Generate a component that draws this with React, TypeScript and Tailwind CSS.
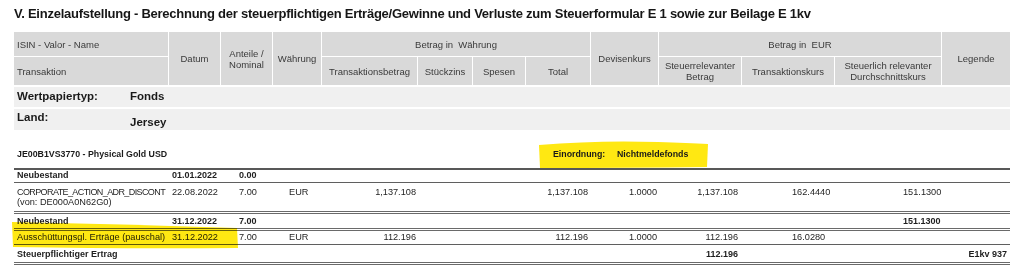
const FONT = "font-['Liberation_Sans_Narrow','Liberation_Sans',Arial,sans-serif]";

const COLS =
  "grid grid-cols-[154px_51px_51px_48px_95px_54px_52px_64px_67px_82px_92px_106px_68px] gap-x-px";

function HeadCell({ children, className = "" }: { children?: React.ReactNode; className?: string }) {
  return (
    <div className={`flex items-center justify-center bg-[#d9d9d9] text-center leading-[11px] ${className}`}>
      {children}
    </div>
  );
}

function Header() {
  return (
    <div className={`${COLS} grid-rows-[24px_28px] gap-y-px text-[9.5px] text-[#3a3a3a]`}>
      <HeadCell className="!justify-start pl-[3px]">ISIN - Valor - Name</HeadCell>
      <HeadCell className="row-span-2">Datum</HeadCell>
      <HeadCell className="row-span-2">
        Anteile /<br />
        Nominal
      </HeadCell>
      <HeadCell className="row-span-2">Währung</HeadCell>
      <HeadCell className="col-span-4">Betrag in&nbsp; Währung</HeadCell>
      <HeadCell className="row-span-2">Devisenkurs</HeadCell>
      <HeadCell className="col-span-3">Betrag in&nbsp; EUR</HeadCell>
      <HeadCell className="row-span-2">Legende</HeadCell>
      <HeadCell className="!justify-start pl-[3px]">Transaktion</HeadCell>
      <HeadCell>Transaktionsbetrag</HeadCell>
      <HeadCell>Stückzins</HeadCell>
      <HeadCell>Spesen</HeadCell>
      <HeadCell>Total</HeadCell>
      <HeadCell>
        Steuerrelevanter
        <br />
        Betrag
      </HeadCell>
      <HeadCell>Transaktionskurs</HeadCell>
      <HeadCell>
        Steuerlich relevanter
        <br />
        Durchschnittskurs
      </HeadCell>
    </div>
  );
}

type Row = {
  cells: (string | string[])[];
  bold?: boolean;
  h: string;
  pt: string;
};

// per-column alignment / padding for the data rows
const CELL = [
  "pl-[3px]",
  "pl-[3px]",
  "pl-[18px]",
  "pl-[16px]",
  "text-right pr-[1px]",
  "",
  "",
  "text-right pr-[2px]",
  "text-right pr-[1px]",
  "text-right pr-[3px]",
  "pl-[50px]",
  "pl-[68px]",
  "text-right pr-[3px]",
];

const rows: Row[] = [
  { cells: ["Neubestand", "01.01.2022", "0.00"], bold: true, h: "h-[12px]", pt: "pt-0" },
  {
    cells: [
      ["CORPORATE_ACTION_ADR_DISCONT", "(von: DE000A0N62G0)"],
      "22.08.2022",
      "7.00",
      "EUR",
      "1,137.108",
      "",
      "",
      "1,137.108",
      "1.0000",
      "1,137.108",
      "162.4440",
      "151.1300",
    ],
    h: "h-[28px]",
    pt: "pt-[4px]",
  },
  {
    cells: ["Neubestand", "31.12.2022", "7.00", "", "", "", "", "", "", "", "", "151.1300"],
    bold: true,
    h: "h-[14px]",
    pt: "pt-[2px]",
  },
  {
    cells: [
      "Ausschüttungsgl. Erträge (pauschal)",
      "31.12.2022",
      "7.00",
      "EUR",
      "112.196",
      "",
      "",
      "112.196",
      "1.0000",
      "112.196",
      "16.0280",
    ],
    h: "h-[13px]",
    pt: "pt-[1px]",
  },
  {
    cells: ["Steuerpflichtiger Ertrag", "", "", "", "", "", "", "", "", "112.196", "", "", "E1kv 937"],
    bold: true,
    h: "h-[17px]",
    pt: "pt-[4px]",
  },
];

function DataRow({ row }: { row: Row }) {
  return (
    <div
      className={`${COLS} ${row.h} ${row.pt} leading-[10px] text-[#1e1e1e] ${
        row.bold ? "text-[9px] font-bold" : "text-[9.2px]"
      }`}
    >
      {CELL.map((cls, i) => {
        const v = row.cells[i] ?? "";
        return (
          <div key={i} className={`whitespace-nowrap ${cls}`}>
            {Array.isArray(v)
              ? v.map((l, j) => (
                  <div key={l} className={j === 0 ? "text-[9px] tracking-[-0.6px]" : ""}>
                    {l}
                  </div>
                ))
              : v}
          </div>
        );
      })}
    </div>
  );
}

const Single = () => <div className="h-px bg-[#5f5f5f]" />;
const Double = () => <div className="h-[3px] border-y border-[#6a6a6a]" />;

export default function App() {
  return (
    <div className={`relative h-[278px] w-[1024px] overflow-hidden bg-white ${FONT}`}>
      <div className="px-[14px] pt-[5px]">
        <h1 className="h-[27px] text-[13px] font-bold leading-[18px] tracking-[-0.25px] text-[#161616]">
          V. Einzelaufstellung - Berechnung der steuerpflichtigen Erträge/Gewinne und Verluste zum Steuerformular E 1 sowie zur Beilage E 1kv
        </h1>

        <div className="w-[996px]">
          <Header />

          <div className="mt-[2px] flex h-[20px] items-center bg-[#f0f0f0] text-[11.5px] font-bold text-[#1a1a1a]">
            <span className="w-[116px] pl-[3px]">Wertpapiertyp:</span>
            <span>Fonds</span>
          </div>
          <div className="mt-[2px] flex h-[21px] bg-[#f0f0f0] text-[11.5px] font-bold leading-[14px] text-[#1a1a1a]">
            <span className="w-[116px] pl-[3px] pt-[1px]">Land:</span>
            <span className="pt-[6px]">Jersey</span>
          </div>

          <div className="relative flex h-[38px] pt-[17px] text-[8.8px] font-bold leading-[14px] text-[#1a1a1a]">
            <svg className="absolute left-[524px] top-[11px]" width="172" height="28" viewBox="0 0 172 28">
              <path d="M1 4 Q 60 -1 120 1 Q 150 2 170 3 L 169 26 Q 90 27 2 27 Z" fill="#ffe812" />
            </svg>
            <span className="relative w-[539px] pl-[3px]">JE00B1VS3770 - Physical Gold USD</span>
            <span className="relative w-[64px]">Einordnung:</span>
            <span className="relative">Nichtmeldefonds</span>
          </div>

          <div className="h-[2px] bg-[#585858]" />
          <DataRow row={rows[0]} />
          <Single />
          <DataRow row={rows[1]} />
          <Double />
          <DataRow row={rows[2]} />
          <Double />
          <DataRow row={rows[3]} />
          <Single />
          <DataRow row={rows[4]} />
          <Double />
        </div>
      </div>

      <svg className="absolute left-[10px] top-[220px] mix-blend-multiply" width="230" height="30" viewBox="0 0 230 30">
        <path d="M2 2 Q 110 4 227 8 L 228 28 Q 120 29 3 27 Z" fill="#ffe812" />
      </svg>
    </div>
  );
}
